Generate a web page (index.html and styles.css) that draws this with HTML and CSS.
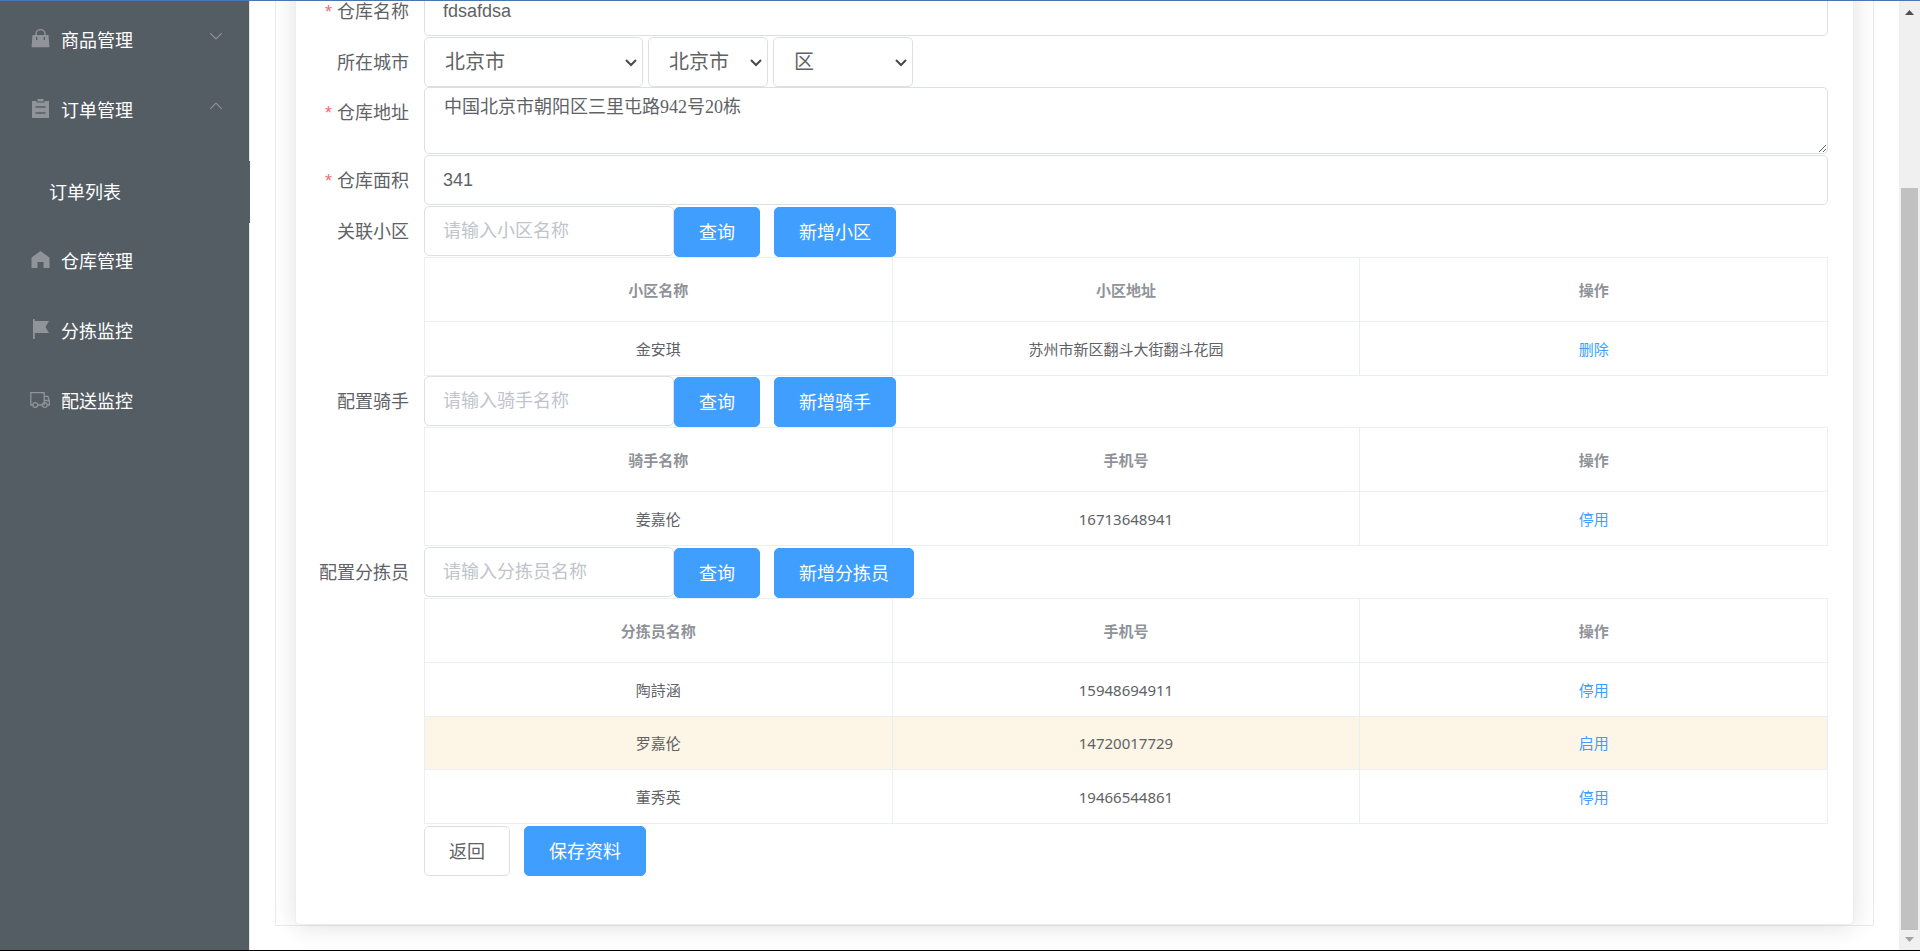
FILE: index.html
```html
<!DOCTYPE html>
<html lang="zh-CN">
<head>
<meta charset="utf-8">
<title>仓库管理</title>
<link rel="stylesheet" href="styles.css">
</head>
<body>
<div class="app">
  <nav class="sidebar">
    <a class="menu-item" href="#">
      <svg class="menu-icon" viewBox="0 0 22 22"><path d="M7 7V6a4.500 4.500 0 0 1 9 0v1" fill="none" stroke="currentColor" stroke-width="1.500"/><path fill="currentColor" fill-rule="evenodd" d="M3.500 7h16l1 12.200h-18zM7 9v3h1.300V9zM14.700 9v3H16V9z"/></svg>
      <span>商品管理</span>
      <svg class="arrow" viewBox="0 0 12 12"><path d="M1 3.500l5 5 5-5"/></svg>
    </a>
    <a class="menu-item" href="#">
      <svg class="menu-icon" viewBox="0 0 22 22"><path fill="currentColor" fill-rule="evenodd" d="M3 3h4.500v1.500h8V3H20v17H3zM6.500 8.300v1.400h10V8.300zM6.500 14.300v1.400h10v-1.400z"/><path fill="currentColor" d="M8.500 1h6v2.500h-6z"/></svg>
      <span>订单管理</span>
      <svg class="arrow" viewBox="0 0 12 12"><path d="M1 8.500l5-5 5 5"/></svg>
    </a>
    <div class="submenu"><a class="submenu-item" href="#">订单列表</a></div>
    <a class="menu-item" href="#">
      <svg class="menu-icon" viewBox="0 0 22 22"><path fill="currentColor" d="M11.500 2l9 6.500V19h-6v-6h-6v6h-6V8.500z"/></svg>
      <span>仓库管理</span>
    </a>
    <a class="menu-item" href="#">
      <svg class="menu-icon" viewBox="0 0 22 22"><path fill="currentColor" d="M4 0h1.800v2H20l-3.500 6L20 14H5.800v6H4z"/></svg>
      <span>分拣监控</span>
    </a>
    <a class="menu-item" href="#">
      <svg class="menu-icon" viewBox="0 0 22 22" fill="none" stroke="currentColor" stroke-width="1.300"><path d="M3.800 16H1.800V3.700h13.400V16M8.800 16h4.500M15.200 7.300h3.600l1.500 4.200V16h-2M15.200 11.500h5"/><circle cx="6.300" cy="16" r="2.400"/><circle cx="15.800" cy="16" r="2.400"/></svg>
      <span>配送监控</span>
    </a>
  </nav>

  <main class="content">
    <div class="panel">
      <form class="card">
        <div class="form-row">
          <label class="label required" for="name">仓库名称</label>
          <input class="input" id="name" type="text" value="fdsafdsa">
        </div>
        <div class="form-row">
          <label class="label" for="province">所在城市</label>
          <div class="selects">
            <div class="select-box province">
              <select class="select" id="province"><option>北京市</option></select>
              <svg class="caret" viewBox="0 0 12 8"><path d="M1 1l5 5 5-5"/></svg>
            </div>
            <div class="select-box city">
              <select class="select" aria-label="城市"><option>北京市</option></select>
              <svg class="caret" viewBox="0 0 12 8"><path d="M1 1l5 5 5-5"/></svg>
            </div>
            <div class="select-box district">
              <select class="select" aria-label="区"><option>区</option></select>
              <svg class="caret" viewBox="0 0 12 8"><path d="M1 1l5 5 5-5"/></svg>
            </div>
          </div>
        </div>
        <div class="form-row gap">
          <label class="label required" for="address">仓库地址</label>
          <textarea class="textarea" id="address">中国北京市朝阳区三里屯路942号20栋</textarea>
        </div>
        <div class="form-row">
          <label class="label required" for="area">仓库面积</label>
          <input class="input" id="area" type="text" value="341">
        </div>

        <div class="form-row">
          <label class="label" for="community">关联小区</label>
          <div class="field">
            <div class="search">
              <input class="input" id="community" type="text" placeholder="请输入小区名称">
              <button class="btn primary" type="button">查询</button>
              <button class="btn primary spaced" type="button">新增小区</button>
            </div>
            <table class="table">
              <thead><tr><th>小区名称</th><th>小区地址</th><th>操作</th></tr></thead>
              <tbody>
                <tr><td>金安琪</td><td>苏州市新区翻斗大街翻斗花园</td><td><a href="#">删除</a></td></tr>
              </tbody>
            </table>
          </div>
        </div>

        <div class="form-row gap">
          <label class="label" for="rider">配置骑手</label>
          <div class="field">
            <div class="search">
              <input class="input" id="rider" type="text" placeholder="请输入骑手名称">
              <button class="btn primary" type="button">查询</button>
              <button class="btn primary spaced" type="button">新增骑手</button>
            </div>
            <table class="table">
              <thead><tr><th>骑手名称</th><th>手机号</th><th>操作</th></tr></thead>
              <tbody>
                <tr><td>姜嘉伦</td><td>16713648941</td><td><a href="#">停用</a></td></tr>
              </tbody>
            </table>
          </div>
        </div>

        <div class="form-row">
          <label class="label" for="sorter">配置分拣员</label>
          <div class="field">
            <div class="search">
              <input class="input" id="sorter" type="text" placeholder="请输入分拣员名称">
              <button class="btn primary" type="button">查询</button>
              <button class="btn primary spaced" type="button">新增分拣员</button>
            </div>
            <table class="table">
              <thead><tr><th>分拣员名称</th><th>手机号</th><th>操作</th></tr></thead>
              <tbody>
                <tr><td>陶詩涵</td><td>15948694911</td><td><a href="#">停用</a></td></tr>
                <tr class="warning"><td>罗嘉伦</td><td>14720017729</td><td><a href="#">启用</a></td></tr>
                <tr><td>董秀英</td><td>19466544861</td><td><a href="#">停用</a></td></tr>
              </tbody>
            </table>
            <div class="actions">
              <button class="btn" type="button">返回</button>
              <button class="btn primary spaced" type="submit">保存资料</button>
            </div>
          </div>
        </div>
      </form>
    </div>
  </main>

  <div class="scrollbar" aria-hidden="true">
    <svg class="scroll-arrow" viewBox="0 0 9 5"><path fill="#505050" d="M0 5h9L4.500 0z"/></svg>
    <div class="track"><div class="thumb"></div></div>
    <svg class="scroll-arrow" viewBox="0 0 9 5"><path fill="#a3a3a3" d="M0 0h9L4.500 5z"/></svg>
  </div>
</div>
</body>
</html>
```
FILE: styles.css
```css
* {
  box-sizing: border-box;
}

body {
  margin: 0;
  font-family: "Noto Sans", "Noto Sans CJK SC", sans-serif;
  font-size: 18px;
  color: #606266;
  background: #fff;
}

a {
  color: #409eff;
  text-decoration: none;
}

.app {
  display: flex;
  height: 100vh;
  overflow: hidden;
  border-top: 1px solid #4a76b2;
  border-bottom: 1px solid #000;
}

/* Sidebar */
.sidebar {
  flex: none;
  width: 250px;
  padding-top: 3px;
  background: #545c64;
  border-right: 1px solid #e6e6e6;
}

.menu-item {
  display: flex;
  align-items: center;
  gap: 10px;
  height: 70px;
  padding: 0 26px 0 29px;
  color: #fff;
}

.menu-icon {
  flex: none;
  width: 22px;
  height: 22px;
  color: #909399;
}

.arrow {
  width: 14px;
  height: 14px;
  margin: 0 0 6px auto;
  fill: none;
  stroke: #909399;
  stroke-width: 1;
}

.submenu {
  padding: 17px 0 2px;
}

.submenu-item {
  display: block;
  height: 62px;
  margin-right: -1px;
  padding-left: 49px;
  line-height: 62px;
  color: #fff;
  background: #545c64;
}

/* Content: scrolled to its end */
.content {
  flex: 1;
  min-width: 0;
  display: flex;
  flex-direction: column;
  justify-content: flex-end;
  padding: 0 25px 24px;
}

.panel {
  padding: 0 19px;
  border: 1px solid #ebebeb;
}

.card {
  padding: 60px 25px 48px 0;
  background: #fff;
  border: 1px solid #ebeef5;
  border-radius: 5px;
  box-shadow: 0 2px 24px rgba(0, 0, 0, 0.12);
}

.form-row {
  display: grid;
  grid-template-columns: 128px minmax(0, 1fr);
  align-items: start;
}

.gap {
  margin-bottom: 1px;
}

.label {
  padding-right: 15px;
  line-height: 50px;
  text-align: right;
  white-space: nowrap;
}

.required::before {
  content: "*";
  margin-right: 5px;
  font-family: "Liberation Sans", sans-serif;
  color: #f56c6c;
}

.input,
.textarea,
.select {
  display: block;
  width: 100%;
  height: 50px;
  margin: 0;
  padding: 0 18px;
  font-family: "Liberation Sans", "Noto Sans CJK SC", sans-serif;
  font-size: 18px;
  color: #606266;
  background: #fff;
  border: 1px solid #dcdfe6;
  border-radius: 5px;
  outline: none;
}

.input::placeholder {
  color: #c0c4cc;
}

.textarea {
  height: 67px;
  padding: 6px 19px;
  font-family: "Liberation Serif", "Noto Sans CJK SC", serif;
  line-height: 26px;
  resize: vertical;
}

.selects {
  display: flex;
  gap: 5px;
}

.select-box {
  position: relative;
}

.select {
  appearance: none;
  padding: 0 20px;
  font-size: 20px;
}

.caret {
  position: absolute;
  top: 22px;
  right: 6px;
  width: 12px;
  height: 8px;
  fill: none;
  stroke: #4a4a4a;
  stroke-width: 2;
  pointer-events: none;
}

.province {
  width: 219px;
}

.city {
  width: 120px;
}

.district {
  width: 140px;
}

.search {
  display: flex;
  height: 51px;
}

.search .input {
  width: 250px;
}

.btn {
  height: 50px;
  padding: 0 24px;
  font-family: inherit;
  font-size: 18px;
  line-height: 26px;
  color: #606266;
  background: #fff;
  border: 1px solid #dcdfe6;
  border-radius: 5px;
}

.search .btn {
  align-self: flex-end;
}

.btn.primary {
  color: #fff;
  background: #409eff;
  border-color: #409eff;
}

.spaced {
  margin-left: 14px;
}

/* Tables */
.table {
  width: 100%;
  table-layout: fixed;
  border-collapse: separate;
  border-spacing: 0;
  border-top: 1px solid #ebeef5;
  border-left: 1px solid #ebeef5;
  font-size: 15px;
  line-height: 24px;
  text-align: center;
}

.table th,
.table td {
  height: 54px;
  padding: 0 12px;
  border-right: 1px solid #ebeef5;
  border-bottom: 1px solid #ebeef5;
}

.table th {
  height: 64px;
  font-weight: 700;
  color: #909399;
}

.table .warning td {
  height: 53px;
  background: #fdf5e6;
}

.actions {
  display: flex;
  padding-top: 2px;
}

/* Scrollbar */
.scrollbar {
  flex: none;
  display: flex;
  flex-direction: column;
  align-items: center;
  width: 21px;
  padding: 9px 0 8px;
  background: #f0f0f0;
}

.scroll-arrow {
  width: 9px;
  height: 5px;
}

.track {
  flex: 1;
  width: 17px;
  padding: 173px 0 7px;
}

.thumb {
  height: 100%;
  background: #c1c1c1;
}
```
